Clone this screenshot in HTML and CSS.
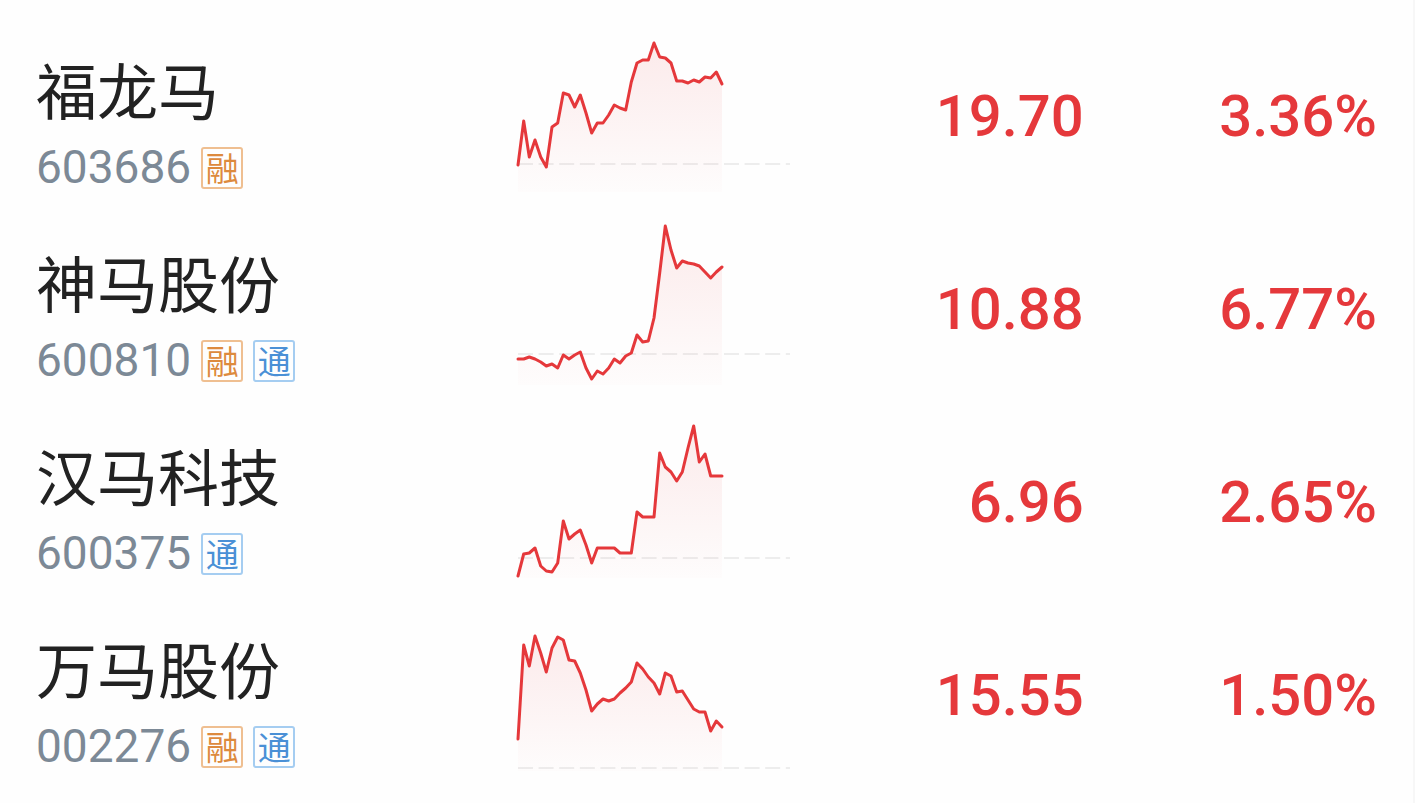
FILE: index.html
```
<!DOCTYPE html>
<html lang="zh-CN">
<head>
    <meta charset="UTF-8">
    <meta name="viewport" content="width=device-width, initial-scale=1.0">
    <title>自选股</title>
    <link rel="stylesheet" href="styles.css">
</head>
<body>
    <table class="stocks">
        <colgroup>
            <col class="colName">
            <col class="colChart">
            <col class="colPrice">
            <col class="colRate">
        </colgroup>
        <tbody>
            <tr>
                <th scope="row">
                    <div class="name">福龙马</div>
                    <div class="info"><span class="code">603686</span><span class="tag rong">融</span></div>
                </th>
                <td><svg class="chart" viewBox="0 0 276 193" data-base="144" data-line="145,101,137,120,137,147,107,103,73,75,87,75,93,113,103,103,95,85,88,90,62,43,40,40,23,37,38,43,61,61,63,60,62,57,58,52,64"></svg></td>
                <td class="num">19.70</td>
                <td class="num">3.36%</td>
            </tr>
            <tr>
                <th scope="row">
                    <div class="name">神马股份</div>
                    <div class="info"><span class="code">600810</span><span class="tag rong">融</span><span class="tag tong">通</span></div>
                </th>
                <td><svg class="chart" viewBox="0 0 276 193" data-base="141" data-line="146,146,144,146,149,153,151,155,142,146,142,139,155,166,158,161,155,146,150,143,140,122,129,128,105,60,13,37,55,48,50,51,53,59,65,59,54"></svg></td>
                <td class="num">10.88</td>
                <td class="num">6.77%</td>
            </tr>
            <tr>
                <th scope="row">
                    <div class="name">汉马科技</div>
                    <div class="info"><span class="code">600375</span><span class="tag tong">通</span></div>
                </th>
                <td><svg class="chart" viewBox="0 0 276 193" data-base="152" data-line="170,148,147,142,160,165,166,157,115,133,128,124,139,157,142,142,142,142,147,147,147,106,111,111,111,47,61,66,75,66,42,20,56,48,70,70,70"></svg></td>
                <td class="num">6.96</td>
                <td class="num">2.65%</td>
            </tr>
            <tr>
                <th scope="row">
                    <div class="name">万马股份</div>
                    <div class="info"><span class="code">002276</span><span class="tag rong">融</span><span class="tag tong">通</span></div>
                </th>
                <td><svg class="chart" viewBox="0 0 276 193" data-base="169" data-line="140,46,67,37,54,73,49,38,41,61,62,74,91,112,105,100,102,100,94,89,83,64,70,78,84,95,74,77,93,92,101,110,113,113,132,122,128"></svg></td>
                <td class="num">15.55</td>
                <td class="num">1.50%</td>
            </tr>
        </tbody>
    </table>

    <script>
        let charts = document.querySelectorAll(".chart");
        const left = 4;
        const step = 17 / 3;
        const bottom = 172;

        //draw base line, area and price line
        charts.forEach((chart, n)=>{
            let values = chart.dataset.line.split(",").map(Number);
            let base = chart.dataset.base;
            let points = values.map((y, i)=>(left + i * step).toFixed(1) + "," + y).join(" ");
            let right = (left + (values.length - 1) * step).toFixed(1);

            chart.innerHTML = `
                <defs>
                    <linearGradient id="fill${n}" x1="0" y1="0" x2="0" y2="1">
                        <stop class="fillTop" offset="0"/>
                        <stop class="fillEnd" offset="1"/>
                    </linearGradient>
                </defs>
                <path class="base" d="M${left} ${base}H276"/>
                <polygon fill="url(#fill${n})" points="${left},${bottom} ${points} ${right},${bottom}"/>
                <polyline class="line" points="${points}"/>`;
        });
    </script>
</body>
</html>
```
FILE: styles.css
```
*{margin: 0; padding: 0; box-sizing: border-box;}
:root{--red:#e5383b; --orange:#dd8a3e; --blue:#4a90d6;}
body{min-height: 100vh; background-color: #fefefe; border-right: 2px solid #f7f7f7; padding-top: 20px; font-family: Roboto, "Noto Sans CJK SC", sans-serif;}
.stocks{width: 100%; table-layout: fixed; border-collapse: collapse;}
.colName{width: 36.4%;}
.colChart{width: 19.5%;}
.colPrice{width: 20.8%;}
.stocks th{padding: 12px 0 0 36px; text-align: left; font-weight: 400; vertical-align: middle;}
.name{font-family: "Noto Sans CJK SC", sans-serif; font-size: 61px; line-height: 66px; color: #222; white-space: nowrap;}
.info{display: flex; align-items: flex-start; gap: 10px; margin-top: 25px;}
.code{font-size: 46px; line-height: 40px; color: #7c8996;}
.tag{width: 42px; height: 42px; border: 2px solid; border-radius: 3px; font-family: "Noto Sans CJK SC", sans-serif; font-size: 33px; line-height: 36px; display: flex; justify-content: center;}
.rong{color: var(--orange); border-color: #efbf91;}
.tong{color: var(--blue); border-color: #a5cdf1;}
.chart{display: block; width: 276px; height: 193px;}
.line{fill: none; stroke: var(--red); stroke-width: 3px; stroke-linejoin: round; stroke-linecap: round;}
.base{fill: none; stroke: #ededed; stroke-width: 2px; stroke-dasharray: 15 5.6;}
.fillTop{stop-color: var(--red); stop-opacity: .1;}
.fillEnd{stop-color: var(--red); stop-opacity: .01;}
.num{text-align: right; font-size: 58px; font-weight: 500; color: var(--red); vertical-align: middle; padding-bottom: 2px;}
.num:last-child{padding-right: 36px;}
```
